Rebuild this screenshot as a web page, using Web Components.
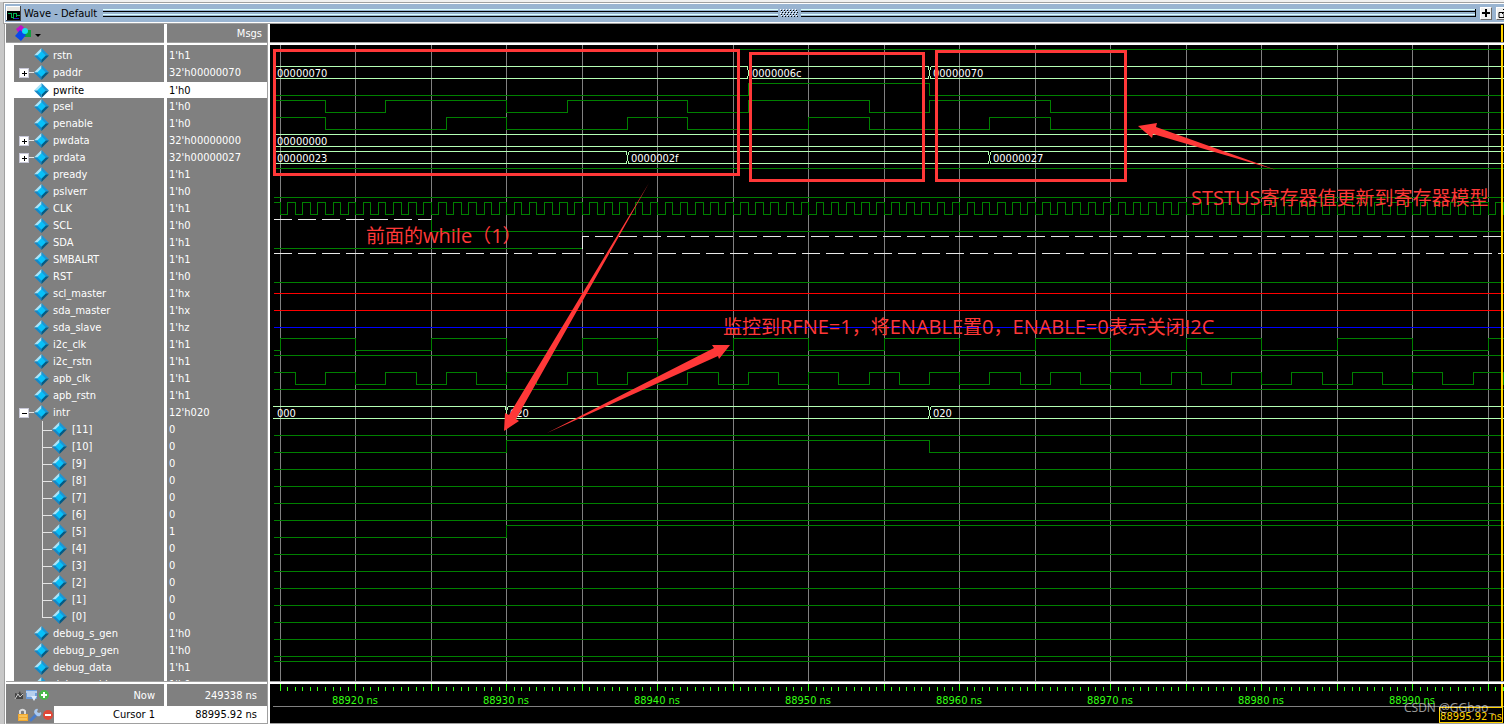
<!DOCTYPE html>
<html lang="en">
<head>
<meta charset="utf-8">
<title>Wave - Default</title>
<style>
    body {
        margin: 0; background: #c8c8c8; color: #fff;
        font: 11px/17px "DejaVu Sans Condensed", "DejaVu Sans", sans-serif;
    }
</style>
</head>
<body>
<wave-window></wave-window>

<script>
const START = 15;       // first major tick, 88915 ns
const SCALE = 15.1;     // pixels per ns
const ORIGIN = 10;
const ROW = 17;
const END = 4000;
const CURSOR = 95.92;
const xAt = t => Math.round(ORIGIN + (t - START) * SCALE - 0.3);

const every = (from, step, level) => {
    const list = [];
    for (let t = from; t < 280; t += step) {
        list.push([t, level]);
        level = 1 - level;
    }
    return list;
};

// start: level at the left edge, edges: [time, new level]
const signals = [
    { name: 'rstn', value: "1'h1", start: 1 },
    { name: 'paddr', value: "32'h00000070", tree: '+', bus: [[null, '00000070'], [46, '0000006c'], [58, '00000070']] },
    { name: 'pwrite', value: "1'h0", selected: true, start: 0, edges: [[46, 1], [58, 0]] },
    { name: 'psel', value: "1'h0", start: 1, edges: [[18, 0], [22, 1], [30, 0], [34, 1], [42, 0], [46, 1], [54, 0], [58, 1], [66, 0]] },
    { name: 'penable', value: "1'h0", start: 1, edges: [[18, 0], [26, 1], [30, 0], [38, 1], [42, 0], [50, 1], [54, 0], [62, 1], [66, 0]] },
    { name: 'pwdata', value: "32'h00000000", tree: '+', bus: [[null, '00000000']] },
    { name: 'prdata', value: "32'h00000027", tree: '+', bus: [[null, '00000023'], [38, '0000002f'], [62, '00000027']] },
    { name: 'pready', value: "1'h1", start: 1 },
    { name: 'pslverr', value: "1'h0", start: 0 },
    { name: 'CLK', value: "1'h1", start: 1, edges: every(15, 0.5, 0) },
    { name: 'SCL', value: "1'h0", start: 0, from: 25, weakTo: 25 },
    { name: 'SDA', value: "1'h1", start: 0, to: 35, weakFrom: 35 },
    { name: 'SMBALRT', value: "1'h1", weak: true },
    { name: 'RST', value: "1'h0", start: 0 },
    { name: 'scl_master', value: "1'hx", mid: '#f00' },
    { name: 'sda_master', value: "1'hx", mid: '#f00' },
    { name: 'sda_slave', value: "1'hz", mid: '#00f' },
    { name: 'i2c_clk', value: "1'h1", start: 0, edges: every(15, 5, 1) },
    { name: 'i2c_rstn', value: "1'h1", start: 1 },
    { name: 'apb_clk', value: "1'h1", start: 1, edges: every(16, 2, 0) },
    { name: 'apb_rstn', value: "1'h1", start: 1 },
    { name: 'intr', value: "12'h020", tree: '-', bus: [[null, '000'], [30, '020'], [58, '020']] },
    ...Array.from({ length: 12 }, (_, i) => {
        const bit = 11 - i;
        const edges = bit === 10 ? [[30, 1], [58, 0]] : bit === 5 ? [[30, 1]] : [];
        return { name: `[${bit}]`, value: bit === 5 ? '1' : '0', child: true, last: bit === 0, start: 0, edges };
    }),
    { name: 'debug_s_gen', value: "1'h0", start: 0 },
    { name: 'debug_p_gen', value: "1'h0", start: 0 },
    { name: 'debug_data', value: "1'h1", start: 1 },
    { name: 'debug_addr', value: "1'h0", start: 0 }
];

class WaveTitle extends HTMLElement {
    connectedCallback() {
        this.attachShadow({ mode: 'open' });
        this.shadowRoot.innerHTML = `
            <style>
                :host {
                    display: flex; align-items: center; height: 18px; padding-left: 1px;
                    background: #99b4d1; color: #000; overflow: hidden;
                    border-top: 1px solid #fff; border-bottom: 1px solid #fff;
                }
                .icon { flex: none; margin-right: 3px; }
                .grip { flex: 1; height: 8px; margin-left: 6px; border-right: 1px solid #000;
                    background: linear-gradient(#dff 1px, #99b4d1 1px, #99b4d1 2px, #000 2px, #000 3px, #99b4d1 3px, #99b4d1 5px, #dff 5px, #dff 6px, #99b4d1 6px, #99b4d1 7px, #000 7px); }
                .grip.left { border-right: 0; }
                .grip.right { margin-left: 2px; }
                .dots { flex: none; margin-left: 2px; }
                button {
                    flex: none; width: 12px; height: 13px; padding: 0; margin-left: 4px; display: grid; place-items: center;
                    background: #f0f0f0; border: 1px solid; border-color: #fff #696969 #696969 #fff;
                }
                button:last-child { margin-right: -4px; }
            </style>
            <svg class="icon" width="15" height="15" shape-rendering="crispEdges">
                <path d="M0 0h15v15h-15z" fill="#444"/><path d="M0 0h14v14h-14z" fill="#fff"/><path d="M1 1h13v4h-13z" fill="#e8e6e0"/>
                <path d="M1 5h13v9h-13z"/><path d="M2 7.500h3v4h2M7 12.500v-5h3v3M10 9.500h4" fill="none" stroke="#00b050"/><path d="M8 12.500h5" stroke="#22c"/>
            </svg>
            <span>Wave - Default</span>
            <div class="grip left"></div>
            <svg class="dots" width="19" height="9" shape-rendering="crispEdges"></svg>
            <div class="grip right"></div>
            <button aria-label="Maximize pane"><svg width="8" height="8" shape-rendering="crispEdges"><path d="M3 0h2v3h3v2h-3v3h-2v-3h-3v-2h3z"/></svg></button>
            <button aria-label="Undock pane"><svg width="9" height="9" fill="none" stroke="#000"><path d="M1 3.500h5v5h-5zM4 5L8 1M5 .5h3.500v3"/></svg></button>
        `;
        let dots = '';
        for (let y = 0; y < 4; y++) {
            for (let x = 0; x < 6; x++) {
                const px = x * 3 + (y % 2);
                dots += `<path d="M${px} ${y * 2}h1v1h-1z" fill="#fff"/><path d="M${px + 1} ${y * 2 + 1}h1v1h-1z"/>`;
            }
        }
        this.shadowRoot.querySelector('.dots').innerHTML = dots;
    }
}
customElements.define('wave-title', WaveTitle);

class SignalRow extends HTMLElement {
    connectedCallback() {
        const s = this.signal;
        let guide = '<span class="toggle"></span><span class="link"></span>';
        if (s.child) {
            guide = `<svg width="38" height="17" shape-rendering="crispEdges"><path d="M28 0h1v${s.last ? 9 : 17}h-1zM28 9h10v1h-10z" fill="#e4e4e4"/></svg>`;
        } else if (s.tree) {
            const bar = s.tree === '+' ? 'M2 4h5v1h-5zM4 2h1v5h-1z' : 'M2 4h5v1h-5z';
            guide = `<button class="toggle" aria-label="Toggle ${s.name}"><svg width="9" height="9" shape-rendering="crispEdges"><path d="${bar}"/></svg></button><span class="link on"></span>`;
        }
        this.attachShadow({ mode: 'open' });
        this.shadowRoot.innerHTML = `
            <style>
                :host { display: grid; grid-template-columns: 150px 100px; column-gap: 3px; height: 17px; }
                .cell { display: flex; align-items: center; background: #808080; white-space: pre; overflow: hidden; }
                .selected { background: #fff; color: #000; border-top: 1px solid #808080; height: 16px; }
                .value { padding-left: 2px; }
                .toggle { flex: none; width: 10px; height: 10px; margin-left: 5px; padding: 0; }
                button { border: 1px solid #c8c8d8; background: #fff; display: grid; place-items: center; }
                .link { width: 5px; height: 1px; }
                .link.on { background: #e4e4e4; }
                .gem { flex: none; margin-right: ${s.child ? 5 : 4}px; }
                svg { flex: none; }
            </style>
            <div class="cell ${s.selected ? 'selected' : ''}">${guide}<svg class="gem" width="15" height="15" viewBox="0 0 14 14">
                <path d="M7 0L0 7h7z" fill="#a8e4fa"/><path d="M7 0l7 7H7z" fill="#1c96d4"/>
                <path d="M0 7l7 7V7z" fill="#1488c8"/><path d="M14 7l-7 7V7z" fill="#045a84"/>
                <path d="M7 3l4 4-4 4-4-4z" fill="#08c0f8"/></svg><span>${s.name}</span></div>
            <div class="cell value ${s.selected ? 'selected' : ''}">${s.value}</div>
        `;
    }
}
customElements.define('signal-row', SignalRow);

class SignalList extends HTMLElement {
    connectedCallback() {
        this.attachShadow({ mode: 'open' });
        this.shadowRoot.innerHTML = `
            <style>
                :host { display: block; min-height: 0; overflow: hidden; padding-left: 8px; background: #fff; }
                .top { display: grid; grid-template-columns: 150px 100px; column-gap: 3px; height: 2px; }
                .top i { background: #808080; }
            </style>
            <div class="top"><i></i><i></i></div>
        `;
        for (const signal of signals) {
            const row = document.createElement('signal-row');
            row.signal = signal;
            this.shadowRoot.append(row);
        }
    }
}
customElements.define('signal-list', SignalList);

class WavePlot extends HTMLElement {
    connectedCallback() {
        this.attachShadow({ mode: 'open' });
        this.shadowRoot.innerHTML = `
            <style>
                :host { display: block; min-height: 0; overflow: hidden; background: #000; contain: size; }
                svg { display: block; width: 100%; height: 100%; }
                path { fill: none; stroke: #008000; shape-rendering: crispEdges; }
                .grid { stroke: #808080; }
                .bus { stroke: #b4ffb4; }
                .weak { stroke: #e8e8e8; stroke-dasharray: 18 6; }
                .cursor { stroke: #ffd200; stroke-width: 2; }
                text { fill: #fff; }
            </style>
            <svg>${this.grid()}${signals.map((s, i) => this.trace(s, 10 + i * ROW)).join('')}
                <path class="cursor" d="M${xAt(CURSOR)} 0V${END}"/></svg>
        `;
    }

    grid() {
        let d = '';
        for (let t = START; t < 280; t += 5) d += `M${xAt(t) + .5} 0V${END}`;
        return `<path class="grid" d="${d}"/>`;
    }

    trace(s, mid) {
        const hi = mid - 5.5, lo = mid + 6.5;
        if (s.bus) return this.bus(s.bus, hi, lo, mid);
        if (s.mid) return `<path style="stroke:${s.mid}" d="M4 ${mid + .5}H${END}"/>`;
        if (s.weak) return `<path class="weak" d="M4 ${hi}H${END}"/>`;

        const y = v => v ? hi : lo;
        let out = '';
        let d = s.from ? `M${xAt(s.from) + .5} ${hi}V${lo}` : `M4 ${y(s.start)}`;
        for (const [t, v] of s.edges || []) d += `H${xAt(t) + .5}V${y(v)}`;
        d += `H${s.to ? xAt(s.to) : END}`;
        out += `<path d="${d}"/>`;
        if (s.weakTo) out += `<path class="weak" d="M4 ${hi}H${xAt(s.weakTo)}"/>`;
        if (s.weakFrom) out += `<path class="weak" d="M${xAt(s.weakFrom) + .5} ${lo}V${hi}H${END}"/>`;
        return out;
    }

    bus(parts, hi, lo, mid) {
        let d = '', labels = '';
        parts.forEach(([t, text], i) => {
            const from = t === null ? 3 : xAt(t) + 1.5;
            const next = parts[i + 1];
            const to = next ? xAt(next[0]) - .5 : END;
            if (t !== null) d += `M${from} ${hi}v3M${from} ${lo}v-3M${from - 1} ${hi + 3}V${lo - 3}`;
            if (next) d += `M${to} ${hi}v3M${to} ${lo}v-3`;
            d += `M${from} ${hi}H${to}M${from} ${lo}H${to}`;
            labels += `<text x="${t === null ? 7 : xAt(t) + 4}" y="${mid + 5}">${text}</text>`;
        });
        return `<path class="bus" d="${d}"/>${labels}`;
    }
}
customElements.define('wave-plot', WavePlot);

class WaveRuler extends HTMLElement {
    connectedCallback() {
        let ticks = '', labels = '';
        // only as many labels as the window has room for
        const last = START + (window.innerWidth - 304) / SCALE;
        for (let i = 0; i < 500; i++) {
            const t = START + i / 2;
            ticks += `M${xAt(t) + .5} ${i % 10 ? 3 : 0}V7`;
            if (i % 20 === 10 && t < last) labels += `<text x="${xAt(t)}" y="20">${88900 + t} ns</text>`;
        }
        this.attachShadow({ mode: 'open' });
        this.shadowRoot.innerHTML = `
            <style>
                :host { display: block; background: #000; overflow: hidden; contain: size; }
                svg { display: block; width: 100%; height: 100%; }
                path, rect { fill: none; shape-rendering: crispEdges; }
                text { fill: #3f1; text-anchor: middle; }
                .readout { fill: #ffd200; }
            </style>
            <svg>
                <path d="${ticks}" stroke="#3f1"/>${labels}
                <path d="M3 22.500H${END}" stroke="#808080"/>
                <path d="M${xAt(CURSOR)} 0V23" stroke="#ffd200" stroke-width="2"/>
                <rect x="1169.500" y="23.500" width="63" height="15" stroke="#ffd200" style="fill:#000"/>
                <text class="readout" x="1201" y="36">88995.92 ns</text>
            </svg>
        `;
    }
}
customElements.define('wave-ruler', WaveRuler);

class CursorPane extends HTMLElement {
    connectedCallback() {
        this.attachShadow({ mode: 'open' });
        this.shadowRoot.innerHTML = `
            <style>
                :host { display: grid; grid-template: 22px 17px / 158px 100px; column-gap: 3px; background: #fff; }
                div { display: flex; align-items: center; justify-content: flex-end; padding-right: 10px; background: #808080; }
                .on { background: #fff; color: #000; }
                .tools { justify-content: flex-start; padding: 0; width: 48px; height: 17px; margin-right: auto; }
                .name { padding-right: 9px; }
                svg { flex: none; }
            </style>
            <div class="name"><div class="tools"><svg width="48" height="16">
                <path d="M9 6l3 1 2-3 1 3 2-1v6H9z" fill="#444"/><path d="M9 12l3-5 2 3 3-3" fill="none" stroke="#ccc"/>
                <path d="M20 3h11v9H20z" fill="#6d9ddb"/><path d="M20 5h11M21 7h8M21 9h8" stroke="#fff"/><path d="M25 9h6l-3 5z" fill="#ddeafc"/>
                <circle cx="38" cy="8" r="5" fill="#48b848"/><path d="M38 5v6M35 8h6" stroke="#fff" stroke-width="2"/></svg></div><span>Now</span></div>
            <div>249338 ns</div>
            <div class="name on"><div class="tools"><svg width="48" height="16">
                <path d="M14 8V4a3 3 0 0 1 5 0v3" fill="none" stroke="#ddd" stroke-width="2"/><path d="M12 7h10v7H12z" fill="#f0a830"/><path d="M13 9h8M13 12h8" stroke="#ffdc80"/>
                <path d="M25 13l5-5" stroke="#4a7cc8" stroke-width="3" stroke-linecap="round"/><path d="M32 2a3 3 0 0 0-3 5l2 2a3 3 0 0 0 4-4l-2 1-2-1z" fill="#a9c8f0"/>
                <circle cx="42" cy="8" r="5" fill="#e04838"/><path d="M39 8h6" stroke="#fff" stroke-width="2"/></svg></div><span>Cursor 1</span></div>
            <div class="on">88995.92 ns</div>
        `;
    }
}
customElements.define('cursor-pane', CursorPane);

// red marks lie over the whole plot area
class WaveNotes extends HTMLElement {
    connectedCallback() {
        this.attachShadow({ mode: 'open' });
        this.shadowRoot.innerHTML = `
            <style>
                :host { display: block; position: absolute; inset: 0; pointer-events: none; overflow: hidden; contain: size; }
                svg { display: block; width: 100%; height: 100%; }
                text, path { fill: #ff3838; }
                text { font: 19px "Open Sans", "Noto Sans CJK SC", sans-serif; }
                tspan { font-size: 20px; }
                rect { fill: none; stroke: #ff3838; stroke-width: 3; shape-rendering: crispEdges; }
                .mark { font: 12px "Open Sans", sans-serif; fill: #fff; opacity: .6; }
            </style>
            <svg>
                <rect x="4.500" y="26.500" width="464" height="124"/>
                <rect x="480.500" y="29.500" width="173" height="127"/>
                <rect x="666.500" y="27.500" width="189" height="129"/>
                <path d="M379 159L239 391l-4-2-1 18 15-10-3-2z"/>
                <path d="M277 409L448 332l1 3 11-14-18 0 2 3z"/>
                <path d="M1006 146L886 103l1-4-19 3 14 12 1-4z"/>
                <text x="96" y="219">前面的<tspan>while</tspan>（<tspan>1</tspan>）</text>
                <text x="921" y="181"><tspan>STSTUS</tspan>寄存器值更新到寄存器模型</text>
                <text x="453" y="310">监控到<tspan>RFNE=1</tspan>，将<tspan>ENABLE</tspan>置<tspan>0</tspan>，<tspan>ENABLE=0</tspan>表示关闭<tspan>I2C</tspan></text>
                <text class="mark" x="1134" y="688">CSDN @GGbao_</text>
            </svg>
        `;
    }
}
customElements.define('wave-notes', WaveNotes);

class WaveWindow extends HTMLElement {
    connectedCallback() {
        this.attachShadow({ mode: 'open' });
        this.shadowRoot.innerHTML = `
            <style>
                :host { display: flex; flex-direction: column; height: 100vh; padding: 1px 0 0 4px; box-sizing: border-box; overflow: hidden; border-top: 2px solid #f0f0f0; }
                wave-title { flex: none; border-left: 1px solid #fff; outline: 1px solid #a0a0a0; }
                .body { flex: 1; min-height: 0; margin-top: 1px; display: grid; grid-template-columns: 261px 1fr; column-gap: 3px; padding-left: 1px; background: #fff; border-left: 1px solid #a0a0a0; }
                .side, .main { display: grid; grid-template-rows: 19px 1fr 39px; row-gap: 2px; min-height: 0; min-width: 0; border-bottom: 1px solid #a0a0a0; }
                .main { position: relative; }
                .side { border-right: 1px solid #a0a0a0; width: 261px; }
                .head { display: grid; grid-template-columns: 158px 100px; column-gap: 3px; }
                .head div { display: flex; align-items: center; background: #808080; border-bottom: 1px solid #a0a0a0; }
                .head .msgs { justify-content: flex-end; padding-right: 5px; }
                .band { background: #000; border-bottom: 1px solid #a0a0a0; overflow: hidden; contain: size; }
                .band svg { display: block; width: 100%; height: 100%; }
                .head svg { margin-left: 9px; }
                signal-list, wave-plot { border-bottom: 1px solid #a0a0a0; }
            </style>
            <wave-title></wave-title>
            <div class="body">
                <div class="side">
                    <div class="head">
                        <div><svg width="27" height="16"><path d="M1 4l5-4 6 5-3 3-6-1z" fill="#c010c8"/><path d="M9 5h7v7H8z" fill="#10a040"/>
                            <path d="M5 5l6 5-5 6-6-5z" fill="#0848e8"/><circle cx="10" cy="6" r="3" fill="#10e0f0"/><path d="M20 9h6l-3 3z"/></svg></div>
                        <div class="msgs">Msgs</div>
                    </div>
                    <signal-list></signal-list>
                    <cursor-pane></cursor-pane>
                </div>
                <div class="main">
                    <div class="band"><svg><path d="M${xAt(CURSOR)} 1V18" stroke="#ffd200" stroke-width="2"/></svg></div>
                    <wave-plot></wave-plot>
                    <wave-ruler></wave-ruler>
                    <wave-notes></wave-notes>
                </div>
            </div>
        `;
    }
}
customElements.define('wave-window', WaveWindow);
</script>
</body>
</html>
